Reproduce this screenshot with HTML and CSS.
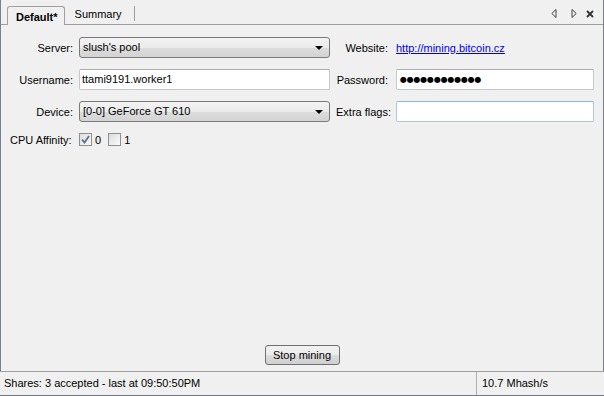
FILE: index.html
```html
<!DOCTYPE html>
<html lang="en">
<head>
    <meta charset="UTF-8">
    <title>Miner</title>
    <link rel="stylesheet" href="styles.css">
</head>
<body>
    <div class="main">
        <div class="tabstrip">
            <div class="tab active">Default*</div>
            <div class="tab">Summary</div>
            <div class="tab-nav">
                <svg class="nav-left" width="6" height="9" viewBox="0 0 6 9"><path d="M5 0.5 L0.8 4.5 L5 8.5 Z" fill="none" stroke="#444" stroke-width="1"/></svg>
                <svg class="nav-right" width="6" height="9" viewBox="0 0 6 9"><path d="M1 0.5 L5.2 4.5 L1 8.5 Z" fill="none" stroke="#444" stroke-width="1"/></svg>
                <svg class="nav-close" width="8" height="8" viewBox="0 0 8 8"><path d="M1 1 L7 7 M7 1 L1 7" stroke="#333" stroke-width="1.8"/></svg>
            </div>
        </div>

        <div class="panel">
            <div class="form">
                <span class="label">Server:</span>
                <div class="combo">slush's pool<span class="caret"></span></div>
                <span class="label right">Website:</span>
                <a class="link" href="#">http://mining.bitcoin.cz</a>

                <span class="label">Username:</span>
                <div class="field">ttami9191.worker1</div>
                <span class="label right">Password:</span>
                <div class="field dots">●●●●●●●●●●●●</div>

                <span class="label">Device:</span>
                <div class="combo">[0-0] GeForce GT 610<span class="caret"></span></div>
                <span class="label right">Extra flags:</span>
                <div class="field focus"></div>

                <span class="label wide">CPU Affinity:</span>
                <div class="affinity">
                    <span class="check on">
                        <svg width="9" height="9" viewBox="0 0 9 9"><path d="M1 4.5 L3.5 7.5 L8 1" fill="none" stroke="#5a6f8c" stroke-width="1.8"/></svg>
                    </span>
                    <span>0</span>
                    <span class="check"></span>
                    <span>1</span>
                </div>
            </div>

            <div class="actions">
                <button class="btn">Stop mining</button>
            </div>
        </div>
    </div>

    <div class="statusbar">
        <div class="status-left">Shares: 3 accepted - last at 09:50:50PM</div>
        <div class="status-right">10.7 Mhash/s</div>
    </div>
</body>
</html>
```

FILE: styles.css
```css
* {
    box-sizing: border-box;
}

body {
    margin: 0;
    height: 100vh;
    display: flex;
    flex-direction: column;
    background: #f0f0f0;
    font-family: 'Liberation Sans', Arial, sans-serif;
    font-size: 11px;
    color: #000;
    overflow: hidden;
}

.main {
    flex: 1;
    display: flex;
    flex-direction: column;
    border-left: 1px solid #75818f;
    border-right: 1px solid #75818f;
}

/* tabs */
.tabstrip {
    height: 25px;
    display: flex;
    align-items: flex-end;
    border-bottom: 1px solid #a0a0a0;
    padding-left: 6px;
}

.tab {
    height: 15px;
    margin-bottom: 3px;
    padding: 0 12px 0 10px;
    border-right: 1px solid #a0a0a0;
    line-height: 16px;
}

.tab.active {
    height: 19px;
    margin-bottom: -1px;
    padding: 0 6px 0 8px;
    line-height: 20px;
    font-weight: bold;
    background: #f0f0f0;
    border: 1px solid #a0a0a0;
    border-bottom: none;
    border-radius: 3px 3px 0 0;
}

.tab-nav {
    margin-left: auto;
    margin-bottom: 6px;
    margin-right: 9px;
    display: flex;
    align-items: center;
}

.nav-right {
    margin-left: 14px;
}

.nav-close {
    margin-left: 9px;
}

/* form */
.panel {
    flex: 1;
    display: flex;
    flex-direction: column;
    padding: 12px 7px 0 7px;
}

.form {
    display: grid;
    grid-template-columns: 65px 251px 54px 198px;
    grid-template-rows: 21px 21px 21px 13px;
    column-gap: 6px;
    row-gap: 11px;
    align-items: center;
}

.label {
    text-align: right;
    white-space: nowrap;
}

.label.right {
    padding-right: 2px;
}

.label.wide {
    text-align: left;
    margin-left: 2px;
}

.combo {
    height: 21px;
    line-height: 19px;
    padding: 0 3px;
    border: 1px solid #7a7a7a;
    border-radius: 3px;
    background: linear-gradient(#f3f3f3, #ebebeb 50%, #dddddd 51%, #d3d3d3);
    position: relative;
}

.caret {
    position: absolute;
    right: 6px;
    top: 8px;
    border-left: 4px solid transparent;
    border-right: 4px solid transparent;
    border-top: 4px solid #000;
}

.field {
    height: 21px;
    line-height: 19px;
    padding: 0 2px;
    background: #fff;
    border: 1px solid #c5c9cf;
    border-top-color: #abadb3;
    border-radius: 2px;
}

.field.focus {
    border-color: #a8c8e6;
    border-top-color: #8fb5da;
}

.field.dots {
    padding-left: 3px;
    font-family: 'DejaVu Sans', sans-serif;
    font-size: 8px;
    letter-spacing: -0.2px;
}

.link {
    color: #0000ee;
    text-decoration: underline;
}

.affinity {
    grid-column: 2 / 5;
    display: flex;
    align-items: center;
    gap: 3px;
}

.check {
    width: 13px;
    height: 13px;
    border: 1px solid #8e8f8f;
    background: linear-gradient(135deg, #dcdcdc, #fbfbfb);
    display: flex;
    align-items: center;
    justify-content: center;
}

.check + span {
    margin-right: 4px;
}

/* button */
.actions {
    margin-top: auto;
    display: flex;
    justify-content: center;
    padding-bottom: 6px;
}

.btn {
    width: 75px;
    height: 20px;
    padding: 0;
    font: inherit;
    color: #000;
    border: 1px solid #707070;
    border-radius: 3px;
    background: linear-gradient(#f2f2f2, #ebebeb 50%, #dddddd 51%, #cfcfcf);
}

/* status bar */
.statusbar {
    height: 25px;
    display: flex;
    border-top: 1px solid #a0a0a0;
    border-bottom: 1px solid #6f7a86;
    line-height: 23px;
}

.status-left {
    width: 477px;
    padding-left: 4px;
    border-right: 1px solid #b0b0b0;
}

.status-right {
    padding-left: 5px;
}
```
